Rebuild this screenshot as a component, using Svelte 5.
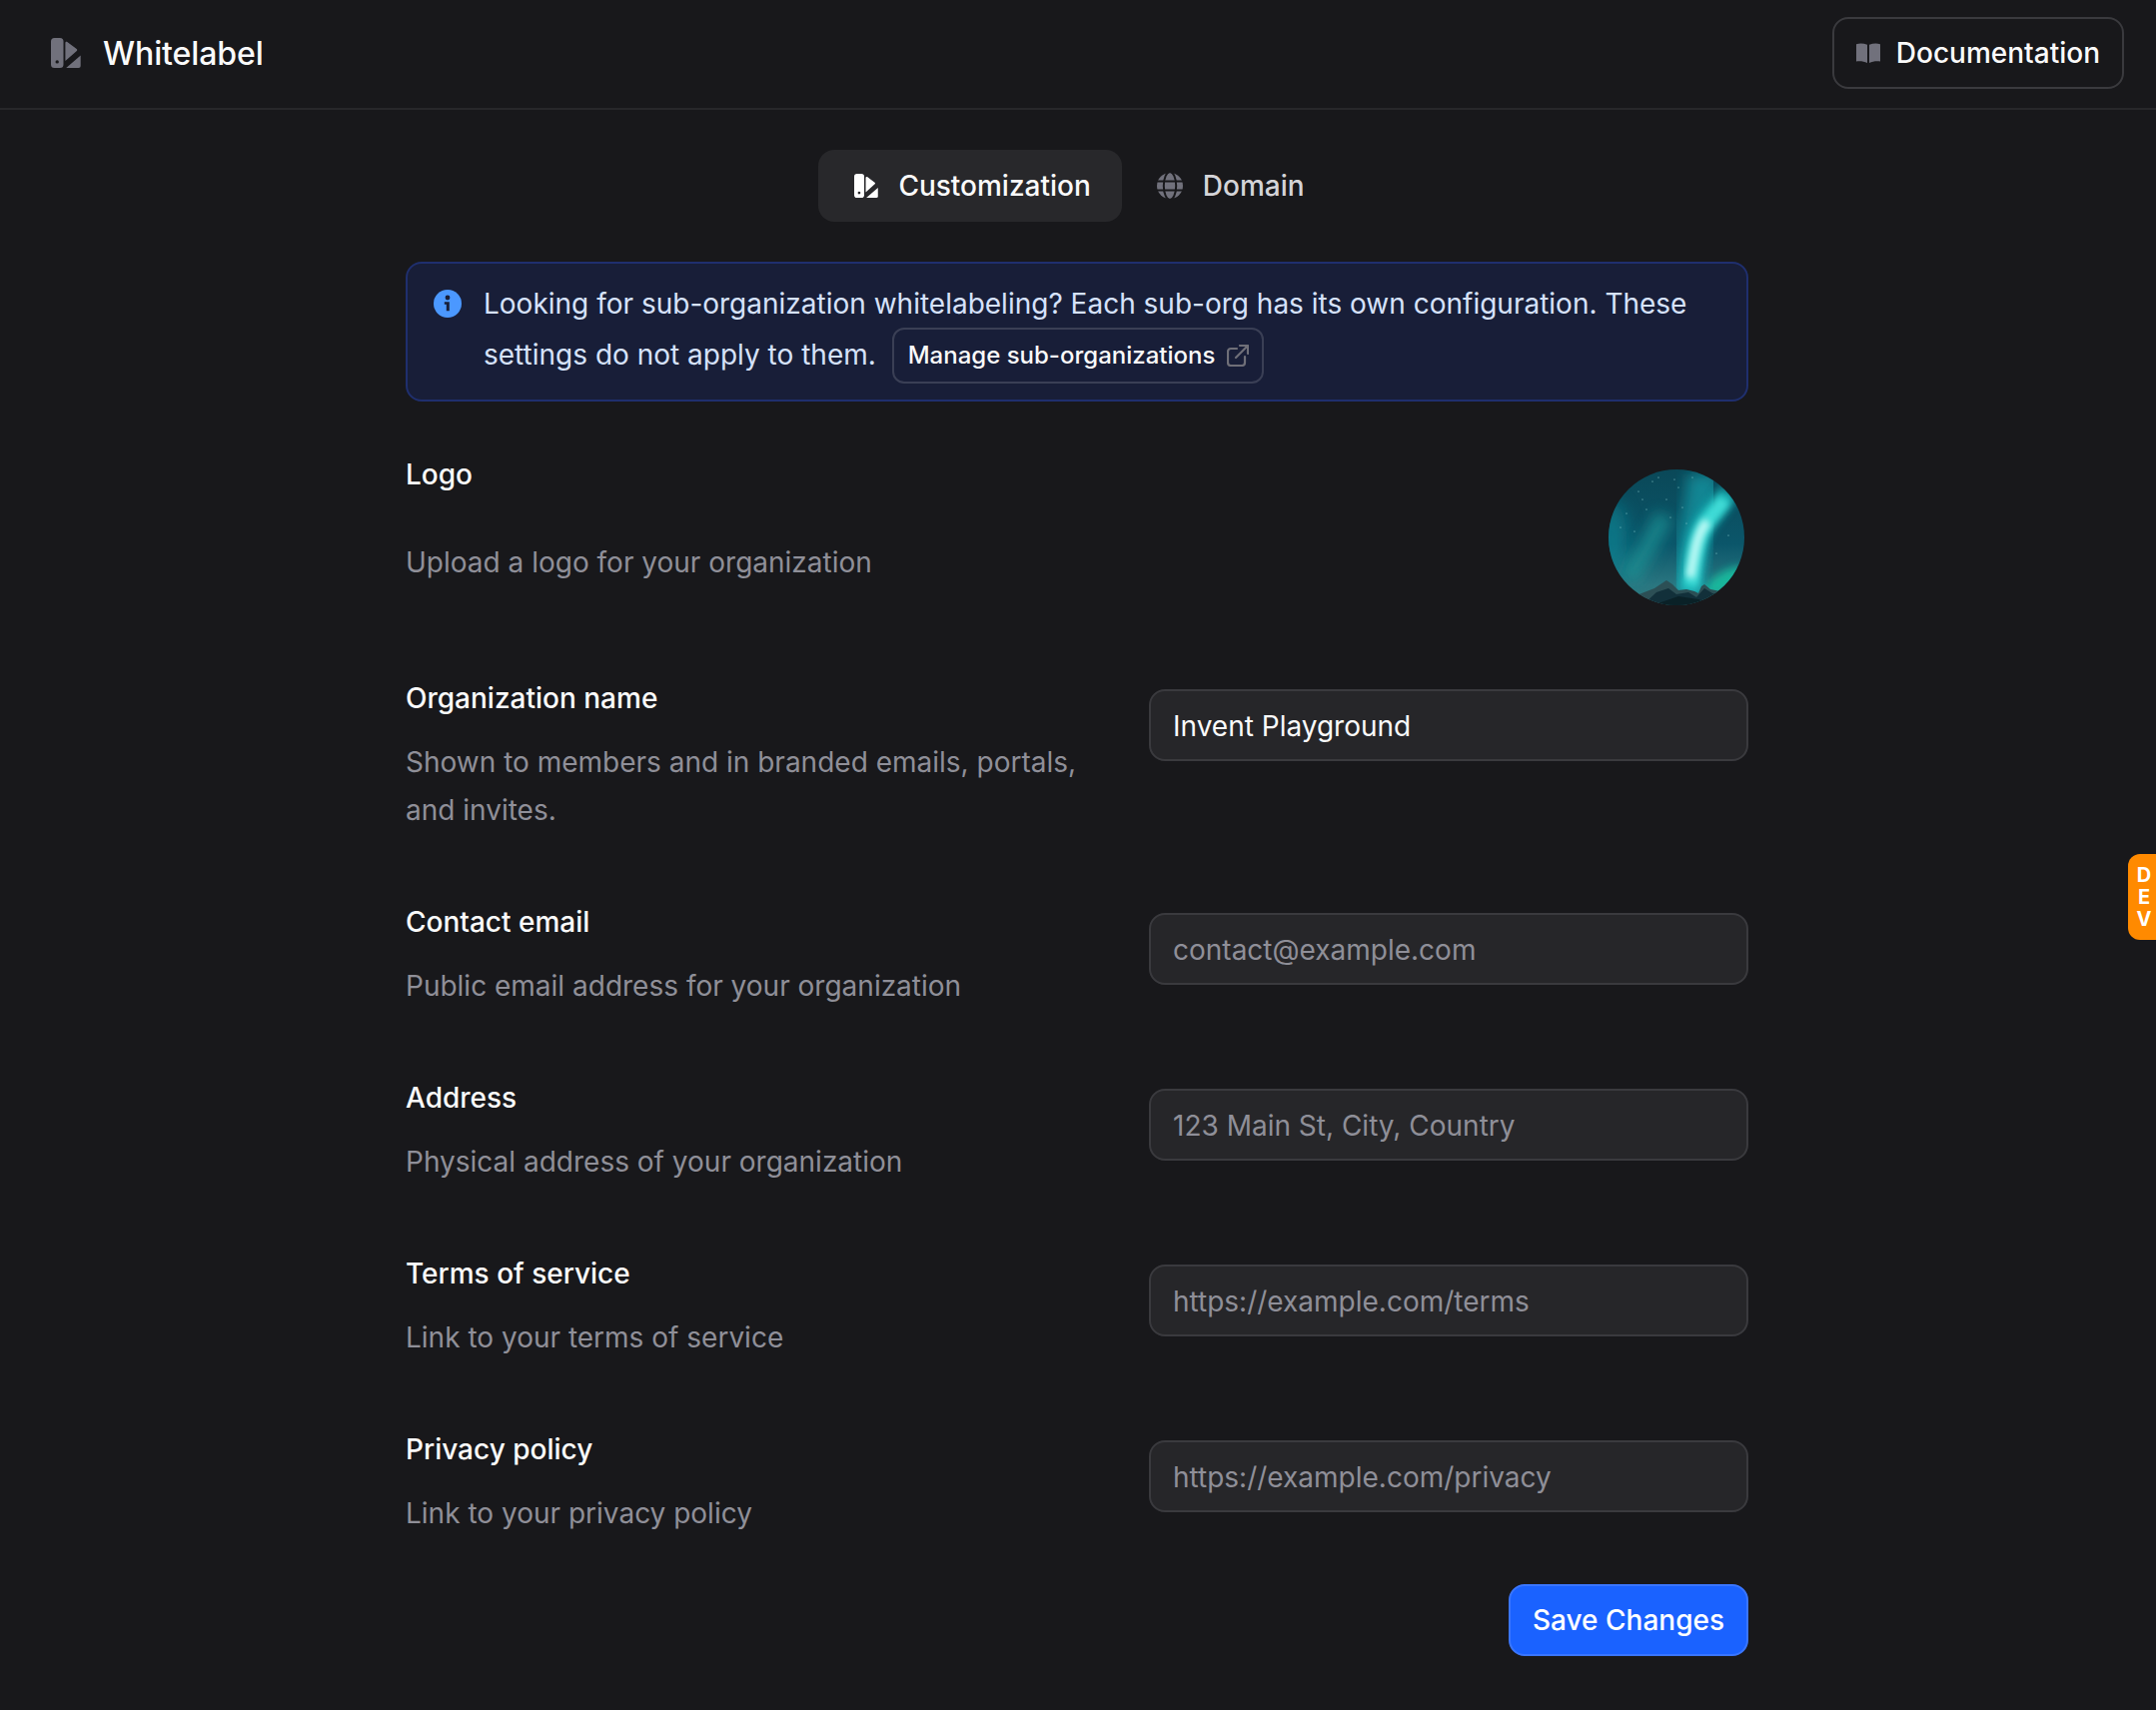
<script lang="ts">
  // Whitelabel settings page, customization tab.
  const rows = [
    { label: 'Organization name', desc: 'Shown to members and in branded emails, portals, and invites.', value: 'Invent Playground', placeholder: '' },
    { label: 'Contact email', desc: 'Public email address for your organization', value: '', placeholder: 'contact@example.com' },
    { label: 'Address', desc: 'Physical address of your organization', value: '', placeholder: '123 Main St, City, Country' },
    { label: 'Terms of service', desc: 'Link to your terms of service', value: '', placeholder: 'https://example.com/terms' },
    { label: 'Privacy policy', desc: 'Link to your privacy policy', value: '', placeholder: 'https://example.com/privacy' }
  ];

  const stars = [
    [30, 22], [44, 12], [58, 30], [38, 40], [18, 44], [70, 18], [84, 8], [62, 48], [26, 62], [50, 8],
    [74, 38], [12, 58], [34, 30], [78, 54], [108, 84], [120, 66], [66, 10]
  ];
</script>

{#snippet brand()}
  <svg viewBox="0 0 30 30" fill="currentColor" aria-hidden="true">
    <path fill-rule="evenodd" d="M3.5 0h5.5a3.5 3.5 0 0 1 3.5 3.5v23a3.5 3.5 0 0 1-3.5 3.5H3.5A3.5 3.5 0 0 1 0 26.5v-23A3.5 3.5 0 0 1 3.5 0Zm2.7 22.2a1.7 1.7 0 1 0 0 3.4 1.7 1.7 0 0 0 0-3.4Z" />
    <path d="M14.4 5c0-1.2 1-1.7 1.9-1.1l9.4 7c.7.5.7 1.4.1 2L14.4 23Z" />
    <path d="M29.7 17.6V28a2 2 0 0 1-2 2H15.2Z" />
  </svg>
{/snippet}

<div class="page">
  <header class="topbar">
    <div class="title">
      <span class="brand-icon">{@render brand()}</span>
      <h1>Whitelabel</h1>
    </div>
    <button class="docs" type="button">
      <svg viewBox="0 0 24 20" fill="currentColor" aria-hidden="true">
        <path d="M0 1.2C3.5.2 7.5.4 11 1.8V20C7.5 18.4 3.5 18 0 18.6Z" />
        <path d="M24 1.2C20.5.2 16.5.4 13 1.8V20c3.5-1.6 7.5-2 11-1.4Z" />
      </svg>
      Documentation
    </button>
  </header>

  <main class="content">
    <nav class="tabs">
      <button class="tab active" type="button">
        <span class="tab-brand">{@render brand()}</span>
        Customization
      </button>
      <button class="tab" type="button">
        <svg class="globe" viewBox="0 0 26 26" aria-hidden="true">
          <circle cx="13" cy="13" r="13" fill="currentColor" />
          <g fill="none" stroke="#18181b" stroke-width="2">
            <ellipse cx="13" cy="13" rx="6.2" ry="14" />
            <path d="M0 8.6h26M0 17.4h26" />
          </g>
        </svg>
        Domain
      </button>
    </nav>

    <div class="notice">
      <svg class="info" viewBox="0 0 28 28" aria-hidden="true">
        <circle cx="14" cy="14" r="14" fill="#4b98ff" />
        <circle cx="14" cy="8" r="2.4" fill="#181e38" />
        <path d="M10.8 12.2h5v9h-3v-6.4h-2Z" fill="#181e38" />
      </svg>
      <p>
        Looking for sub-organization whitelabeling? Each sub-org has its own configuration. These settings do not apply to them.
        <a class="manage" href="#top">
          Manage sub-organizations
          <svg viewBox="0 0 22 22" fill="none" stroke="currentColor" stroke-width="2.2" stroke-linecap="round" stroke-linejoin="round" aria-hidden="true">
            <path d="M10 4H4a3 3 0 0 0-3 3v11a3 3 0 0 0 3 3h11a3 3 0 0 0 3-3v-6" />
            <path d="M13 1h8v8M21 1 9 13" />
          </svg>
        </a>
      </p>
    </div>

    <section class="logo-row">
      <div class="logo-copy">
        <h2>Logo</h2>
        <p>Upload a logo for your organization</p>
      </div>
      <svg class="avatar" viewBox="0 0 136 136" role="img" aria-label="Organization logo">
        <defs>
          <linearGradient id="sky" x1="0" y1="0" x2="0" y2="1">
            <stop offset="0" stop-color="#0a4858" />
            <stop offset="0.55" stop-color="#0b566a" />
            <stop offset="0.85" stop-color="#2a7680" />
            <stop offset="1" stop-color="#2f7c80" />
          </linearGradient>
          <filter id="b3" x="-40%" y="-40%" width="180%" height="180%"><feGaussianBlur stdDeviation="3" /></filter>
          <filter id="b4" x="-40%" y="-40%" width="180%" height="180%"><feGaussianBlur stdDeviation="4" /></filter>
          <filter id="b7" x="-60%" y="-60%" width="220%" height="220%"><feGaussianBlur stdDeviation="7" /></filter>
          <filter id="b9" x="-60%" y="-60%" width="220%" height="220%"><feGaussianBlur stdDeviation="9" /></filter>
          <clipPath id="disc"><circle cx="68" cy="68" r="68" /></clipPath>
        </defs>
        <g clip-path="url(#disc)">
          <rect width="136" height="136" fill="url(#sky)" />
          <ellipse cx="4" cy="72" rx="14" ry="40" fill="#0f8795" opacity=".7" filter="url(#b9)" />
          <path d="M56 46 C46 66 32 90 20 110" fill="none" stroke="#1a9698" stroke-width="18" opacity=".7" filter="url(#b7)" />
          <ellipse cx="116" cy="112" rx="24" ry="9" fill="#12c4a2" opacity=".85" transform="rotate(-32 116 112)" filter="url(#b4)" />
          <path d="M94 4 C96 30 88 50 84 78 S80 116 78 126" fill="none" stroke="#149aa6" stroke-width="32" opacity=".75" filter="url(#b7)" />
          <path d="M120 22 C110 42 93 50 88 76 S83 108 81 124" fill="none" stroke="#1cc2c2" stroke-width="20" opacity=".85" filter="url(#b4)" />
          <path d="M116 30 C106 46 96 50 90 72 S85 100 83 116" fill="none" stroke="#45e0da" stroke-width="13" opacity=".9" filter="url(#b3)" />
          <path d="M99 52 C92 60 88 72 86 84 S83 98 82 108" fill="none" stroke="#bcf9f5" stroke-width="9" filter="url(#b3)" />
          {#each stars as [x, y]}
            <circle cx={x} cy={y} r="0.6" fill="#8fd0d2" />
          {/each}
          <path d="M28 126 46 119 52 115 58 111 64 115 70 121 78 120 86 122 90 124 93 117 96 115 102 120 112 122 122 122 112 136H28Z" fill="#2c4f55" />
          <path d="M34 136 48 123 60 119 68 125 80 123 88 128 96 119 104 124 116 125 100 136Z" fill="#12303a" />
          <path d="M44 136 70 127 90 130 106 136Z" fill="#0a2127" />
        </g>
      </svg>
    </section>

    <form class="fields">
      {#each rows as row}
        <div class="field">
          <div class="field-copy">
            <label for={row.label}>{row.label}</label>
            <p>{row.desc}</p>
          </div>
          <input id={row.label} type="text" value={row.value} placeholder={row.placeholder} />
        </div>
      {/each}
      <div class="actions">
        <button class="save" type="button">Save Changes</button>
      </div>
    </form>
  </main>

  <div class="dev-tab"><span>D</span><span>E</span><span>V</span></div>
</div>

<style>
  :global(body) {
    margin: 0;
    background: #18181b;
  }

  .page {
    min-height: 1712px;
    background: #18181b;
    color: #fafafa;
    font-family: Inter, "Noto Sans", sans-serif;
    font-size: 28px;
    overflow: hidden;
  }

  button {
    font: inherit;
    cursor: pointer;
  }

  .topbar {
    height: 110px;
    box-sizing: border-box;
    border-bottom: 2px solid #27272a;
    display: flex;
    align-items: center;
    justify-content: space-between;
    padding: 0 32px 2px 51px;
  }

  .title {
    display: flex;
    align-items: center;
    gap: 22px;
  }

  .brand-icon {
    display: flex;
    width: 30px;
    height: 30px;
    color: #71717c;
  }

  h1 {
    margin: 0;
    font-size: 32px;
    font-weight: 500;
    letter-spacing: -0.1px;
  }

  .docs {
    display: flex;
    align-items: center;
    gap: 16px;
    height: 72px;
    box-sizing: border-box;
    padding: 0 22px;
    background: transparent;
    color: #fafafa;
    border: 2px solid #3a3a3e;
    border-radius: 16px;
    font-size: 28px;
    font-weight: 500;
  }

  .docs svg {
    width: 24px;
    height: 20px;
    color: #71717c;
  }

  .content {
    width: 1344px;
    margin-left: 406px;
    padding-top: 40px;
  }

  .tabs {
    display: flex;
    justify-content: center;
    margin-bottom: 40px;
  }

  .tab {
    display: flex;
    align-items: center;
    gap: 20px;
    height: 72px;
    padding: 0 31px 0 36px;
    border: 0;
    border-radius: 16px;
    background: transparent;
    color: #d4d4d8;
    font-size: 28px;
    font-weight: 500;
  }

  .tab.active {
    background: #28282b;
    color: #fafafa;
  }

  .tab-brand {
    display: flex;
    width: 24px;
    height: 24px;
    color: #fff;
  }

  .globe {
    width: 26px;
    height: 26px;
    margin-left: -1px;
    color: #71717c;
  }

  .notice {
    display: flex;
    gap: 22px;
    box-sizing: border-box;
    height: 140px;
    padding: 15px 26px 0;
    background: #181e38;
    border: 2px solid #1f2f6e;
    border-radius: 16px;
    color: #d6e2fb;
  }

  .info {
    flex: none;
    width: 28px;
    height: 28px;
    margin-top: 11px;
  }

  .notice p {
    margin: 0;
    font-size: 28px;
    line-height: 51px;
  }

  .manage {
    display: inline-flex;
    align-items: center;
    gap: 12px;
    height: 56px;
    box-sizing: border-box;
    margin: -2px 0 0 8px;
    padding: 0 13px 0 14px;
    border: 2px solid #3a3f55;
    border-radius: 12px;
    color: #fafafa;
    font-size: 24px;
    font-weight: 500;
    line-height: 1;
    text-decoration: none;
    vertical-align: middle;
  }

  .manage svg {
    width: 22px;
    height: 22px;
    color: #6f6f78;
  }

  .logo-row {
    display: flex;
    justify-content: space-between;
    margin-top: 52px;
    height: 156px;
  }

  .logo-copy,
  .field-copy {
    padding-top: 1px;
  }

  h2,
  label {
    display: block;
    margin: 0;
    font-size: 28px;
    font-weight: 500;
    line-height: 40px;
    color: #fafafa;
  }

  .logo-copy p,
  .field-copy p {
    margin: 0;
    font-size: 28px;
    line-height: 48px;
    color: #8f8f98;
  }

  .logo-copy p {
    margin-top: 44px;
  }

  .avatar {
    width: 136px;
    height: 136px;
    margin: 16px 4px 0 0;
  }

  .fields {
    margin-top: 68px;
    display: flex;
    flex-direction: column;
    gap: 67px;
  }

  .field {
    display: grid;
    grid-template-columns: 696px 600px;
    column-gap: 48px;
    align-items: start;
  }

  .field-copy p {
    margin-top: 20px;
  }

  input {
    width: 100%;
    height: 72px;
    margin-top: 12px;
    box-sizing: border-box;
    padding: 1px 22px 0;
    background: #262629;
    border: 2px solid #3a3a3e;
    border-radius: 16px;
    color: #fafafa;
    font: inherit;
    font-size: 28px;
    outline: none;
  }

  input::placeholder {
    color: #8f8f98;
    opacity: 1;
  }

  .actions {
    display: flex;
    justify-content: flex-end;
    margin-top: -20px;
  }

  .save {
    height: 72px;
    width: 240px;
    border: 2px solid #3a76ff;
    border-radius: 16px;
    background: #1a62ff;
    color: #fff;
    font-size: 28px;
    font-weight: 500;
  }

  .dev-tab {
    position: fixed;
    right: 0;
    top: 855px;
    width: 28px;
    height: 86px;
    box-sizing: border-box;
    padding-left: 4px;
    background: #ff8a00;
    border-radius: 12px 0 0 12px;
    color: #fff;
    font-size: 20px;
    font-weight: 700;
    line-height: 22px;
    display: flex;
    flex-direction: column;
    align-items: center;
    justify-content: center;
  }
</style>
